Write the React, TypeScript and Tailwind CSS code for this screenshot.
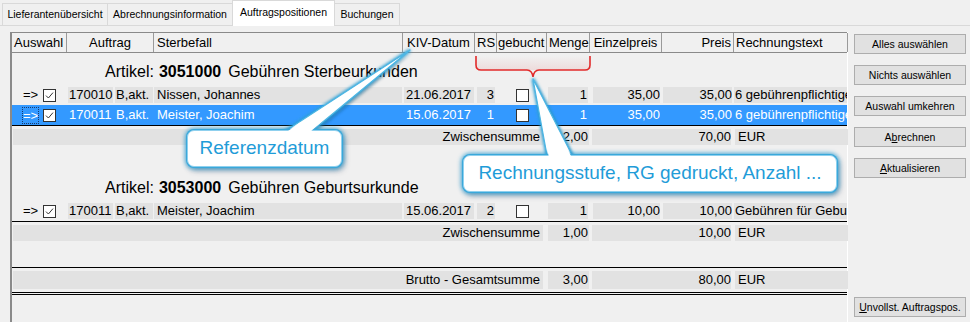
import React from "react";

type Position = {
  nr: string;
  typ: string;
  name: string;
  datum: string;
  rs: string;
  menge: string;
  einzel: string;
  preis: string;
  text: string;
  selected?: boolean;
};

type Gruppe = {
  artikel: string;
  bezeichnung: string;
  positionen: Position[];
  menge: string;
  summe: string;
};

const gruppen: Gruppe[] = [
  {
    artikel: "3051000",
    bezeichnung: "Gebühren Sterbeurkunden",
    positionen: [
      {
        nr: "170010",
        typ: "B,akt.",
        name: "Nissen, Johannes",
        datum: "21.06.2017",
        rs: "3",
        menge: "1",
        einzel: "35,00",
        preis: "35,00",
        text: "6 gebührenpflichtige Sterbeurkunden",
      },
      {
        nr: "170011",
        typ: "B,akt.",
        name: "Meister, Joachim",
        datum: "15.06.2017",
        rs: "1",
        menge: "1",
        einzel: "35,00",
        preis: "35,00",
        text: "6 gebührenpflichtige Sterbeurkunden",
        selected: true,
      },
    ],
    menge: "2,00",
    summe: "70,00",
  },
  {
    artikel: "3053000",
    bezeichnung: "Gebühren Geburtsurkunde",
    positionen: [
      {
        nr: "170011",
        typ: "B,akt.",
        name: "Meister, Joachim",
        datum: "15.06.2017",
        rs: "2",
        menge: "1",
        einzel: "10,00",
        preis: "10,00",
        text: "Gebühren für Geburtsurkunde",
      },
    ],
    menge: "1,00",
    summe: "10,00",
  },
];

const spalten = [
  { label: "Auswahl", w: "w-[55px]", cls: "pl-[2px]" },
  { label: "Auftrag", w: "w-[87px]", cls: "justify-center" },
  { label: "Sterbefall", w: "w-[249px]", cls: "pl-[3px]" },
  { label: "KIV-Datum", w: "w-[72px]", cls: "pl-[4px]" },
  { label: "RS", w: "w-[22px]", cls: "pl-[2px]" },
  { label: "gebucht", w: "w-[50px]", cls: "pl-[1px]" },
  { label: "Menge", w: "w-[43px]", cls: "pl-[2px]" },
  { label: "Einzelpreis", w: "w-[72px]", cls: "justify-center" },
  { label: "Preis", w: "w-[72px]", cls: "justify-end pr-[2px]" },
  { label: "Rechnungstext", w: "w-[114px]", cls: "pl-[2px]" },
];

function Feld({
  w,
  inner = "mx-[1px]",
  my = "my-[2px]",
  grau = true,
  cls = "",
  children,
}: {
  w: string;
  inner?: string;
  my?: string;
  grau?: boolean;
  cls?: string;
  children?: React.ReactNode;
}) {
  return (
    <div className={`${w} h-full flex shrink-0`}>
      <div
        className={`flex-1 flex items-center whitespace-nowrap overflow-hidden ${my} ${inner} ${
          grau ? "bg-[#e2e2e2]" : ""
        } ${cls}`}
      >
        {children}
      </div>
    </div>
  );
}

function Kaestchen({ an }: { an?: boolean }) {
  return (
    <span className="w-[13px] h-[13px] border border-[#333] bg-white flex items-center justify-center shrink-0">
      {an && (
        <svg width="9" height="9" viewBox="0 0 9 9">
          <path d="M1 4.6 L3.4 7 L8 1.6" fill="none" stroke="#333" strokeWidth="1" />
        </svg>
      )}
    </span>
  );
}

function Zeile({ p }: { p: Position }) {
  const sel = !!p.selected;
  return (
    <div className={`h-[20px] flex overflow-hidden ${sel ? "bg-[#3399ff] text-white" : ""}`}>
      <div className="w-[55px] shrink-0 flex items-center pl-[11px] gap-[5px]">
        <span className={sel ? "outline outline-1 outline-dotted outline-[#1a3a6a] leading-[15px]" : ""}>=&gt;</span>
        <Kaestchen an />
      </div>
      <Feld w="w-[47px]" grau={!sel} cls="pl-[1px]">{p.nr}</Feld>
      <Feld w="w-[40px]" grau={!sel} cls="pl-[1px]">{p.typ}</Feld>
      <Feld w="w-[249px]" grau={!sel} inner="mr-[1px]" cls="pl-[3px]">{p.name}</Feld>
      <Feld w="w-[72px]" grau={!sel} cls="pl-[2px]">{p.datum}</Feld>
      <Feld w="w-[22px]" grau={!sel} inner="mx-[2px]" cls="justify-end pr-[1px]">{p.rs}</Feld>
      <div className="w-[50px] shrink-0 flex items-center pl-[19px]">
        <Kaestchen />
      </div>
      <Feld w="w-[43px]" grau={!sel} inner="ml-[1px] mr-[2px]" cls="justify-end pr-[1px]">{p.menge}</Feld>
      <Feld w="w-[72px]" grau={!sel} inner="ml-[3px] mr-[2px]" cls="justify-end">{p.einzel}</Feld>
      <Feld w="w-[72px]" grau={!sel} inner="ml-[1px] mr-[2px]" cls="justify-end">{p.preis}</Feld>
      <Feld w="w-[114px]" grau={!sel} inner="" cls="pl-[1px]">{p.text}</Feld>
    </div>
  );
}

function Summe({ label, menge, summe, hoch = false }: { label: string; menge: string; summe: string; hoch?: boolean }) {
  const my = hoch ? "my-[3px]" : "my-[2px]";
  return (
    <div className={`${hoch ? "h-[24px]" : "h-[20px] mt-[1px]"} flex`}>
      <Feld w="w-[535px]" my={my} inner="ml-[1px] mr-[4px]" cls="justify-end pr-[3px]">{label}</Feld>
      <Feld w="w-[43px]" my={my} inner="ml-[1px] mr-[1px]" cls="justify-end pr-[1px]">{menge}</Feld>
      <Feld w="w-[144px]" my={my} inner="ml-[2px] mr-[3px]" cls="justify-end">{summe}</Feld>
      <Feld w="w-[114px]" my={my} inner="ml-[1px]" cls="pl-[3px]">EUR</Feld>
    </div>
  );
}

function Knopf({ children, className = "" }: { children: React.ReactNode; className?: string }) {
  return (
    <button className={`h-[20px] w-[112px] shrink-0 border border-[#adadad] bg-[#e1e1e1] text-[10.5px] text-black leading-none ${className}`}>
      {children}
    </button>
  );
}

const tail1 = "410,50 271.6,140 300.9,140";
const tail2 = "533,79 548.8,165 577.1,165";

export default function App() {
  return (
    <div className="relative w-[970px] h-[322px] overflow-hidden bg-[#f0f0f0] text-black font-['Liberation_Sans',Arial,sans-serif] flex flex-col">
      {/* Reiter */}
      <div className="h-[26px] shrink-0 flex items-end border-b border-[#d9d9d9] pl-[2px] text-[10.5px]">
        <div className="w-[106px] h-[22px] border border-b-0 border-[#d9d9d9] bg-[#f0f0f0] flex items-center justify-center">
          Lieferantenübersicht
        </div>
        <div className="w-[126px] h-[22px] -ml-px border border-b-0 border-[#d9d9d9] bg-[#f0f0f0] flex items-center justify-center">
          Abrechnungsinformation
        </div>
        <div className="w-[103px] h-[26px] -ml-px -mb-px border border-b-0 border-[#d9d9d9] bg-white flex items-center justify-center pb-[2px]">
          Auftragspositionen
        </div>
        <div className="w-[66px] h-[22px] -ml-px border border-b-0 border-[#d9d9d9] bg-[#f0f0f0] flex items-center justify-center">
          Buchungen
        </div>
      </div>

      <div className="flex-1 flex pl-[10px]">
        {/* Tabelle */}
        <div className="mt-[6px] w-[838px] border-l-2 border-[#8a8a8a] border-r border-r-white flex flex-col text-[13px]">
          <div className="h-[21px] shrink-0 flex border-t border-b border-[#8a8a8a]">
            {spalten.map((s) => (
              <div key={s.label} className={`${s.w} shrink-0 flex items-center border-r border-[#9a9a9a] ${s.cls}`}>
                {s.label}
              </div>
            ))}
          </div>

          {gruppen.map((g, i) => (
            <div key={g.artikel} className={i > 0 ? "mt-[22px]" : ""}>
              <div className="h-[32px] flex items-end pb-[3px] pl-[93px] text-[16px] leading-[20px]">
                Artikel: <span className="font-bold ml-[5px]">{g.artikel}</span>
                <span className="ml-[7px]">{g.bezeichnung}</span>
              </div>
              {g.positionen.map((p, k) => (
                <Zeile key={k} p={p} />
              ))}
              <div className="h-px bg-black" />
              <Summe label="Zwischensumme" menge={g.menge} summe={g.summe} />
            </div>
          ))}

          <div className="mt-[24px] h-px bg-black" />
          <Summe label="Brutto - Gesamtsumme" menge="3,00" summe="80,00" hoch />
          <div className="h-[3px] border-t border-b border-black" />
        </div>

        {/* Knöpfe */}
        <div className="ml-[6px] flex flex-col pt-[8px] pb-[5px] gap-[11px]">
          <Knopf>Alles auswählen</Knopf>
          <Knopf>Nichts auswählen</Knopf>
          <Knopf>Auswahl umkehren</Knopf>
          <Knopf>
            A<span className="underline">b</span>rechnen
          </Knopf>
          <Knopf>
            <span className="underline">A</span>ktualisieren
          </Knopf>
          <Knopf className="mt-auto">
            <span className="underline">U</span>nvollst. Auftragspos.
          </Knopf>
        </div>
      </div>

      {/* Hinweise: Spitzen und Klammer */}
      <svg className="absolute inset-0 z-10 pointer-events-none" width="970" height="322">
        <defs>
          <filter id="glow" x="-50%" y="-50%" width="200%" height="200%">
            <feGaussianBlur stdDeviation="1.6" />
          </filter>
          <linearGradient id="rosa" x1="0" y1="0" x2="0" y2="1">
            <stop offset="0" stopColor="#e8b4b4" stopOpacity="0" />
            <stop offset="1" stopColor="#e8b4b4" stopOpacity="0.35" />
          </linearGradient>
        </defs>
        <rect x="477" y="56" width="112" height="14" fill="url(#rosa)" />
        <path
          d="M476 56 V65 Q476 70 481 70 H527 Q532 70 533 77 Q534 70 539 70 H585 Q590 70 590 65 V56"
          fill="none"
          stroke="#e22a2a"
          strokeWidth="1.6"
        />
        {[tail1, tail2].map((t) => (
          <g key={t}>
            <polygon points={t} fill="#0a3a5a" opacity="0.35" transform="translate(2 3)" filter="url(#glow)" />
            <polygon points={t} fill="#2b9fd4" stroke="#2b9fd4" strokeWidth="3" filter="url(#glow)" />
            <polygon points={t} fill="white" stroke="#4cb6e4" strokeWidth="1.2" strokeLinejoin="round" />
          </g>
        ))}
      </svg>

      <div className="absolute z-20 left-[187px] top-[130px] w-[155px] h-[37px] rounded-[7px] bg-white border border-[#8fd0ee] shadow-[0_0_0_1px_#3aa8da,0_0_4px_2px_rgba(43,159,212,0.8),2px_3px_6px_rgba(0,40,80,0.45)] flex items-center justify-center text-[19px] text-[#1f9cd8]">
        Referenzdatum
      </div>
      <div className="absolute z-20 left-[463px] top-[155px] w-[374px] h-[37px] rounded-[7px] bg-white border border-[#8fd0ee] shadow-[0_0_0_1px_#3aa8da,0_0_4px_2px_rgba(43,159,212,0.8),2px_3px_6px_rgba(0,40,80,0.45)] flex items-center justify-center text-[19px] text-[#1f9cd8]">
        Rechnungsstufe, RG gedruckt, Anzahl ...
      </div>

      <svg className="absolute inset-0 z-30 pointer-events-none" width="970" height="322">
        <polygon points="300.8,122 321.2,122 306.7,135 282.4,135" fill="white" />
        <polygon points="546.8,146 565.9,146 572.5,159 549.2,159" fill="white" />
      </svg>
    </div>
  );
}
